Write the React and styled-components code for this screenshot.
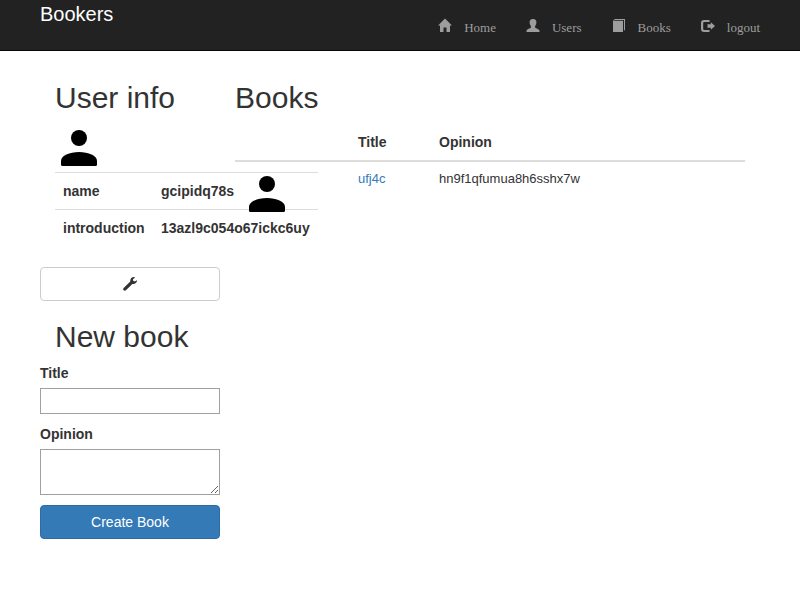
import React from "react";
import styled, { createGlobalStyle } from "styled-components";

const GlobalStyle = createGlobalStyle`
  *, *::before, *::after { box-sizing: border-box; }
  body {
    margin: 0;
    background: #fff;
    color: #333;
    font: 14px/20px "Liberation Sans", Arial, sans-serif;
  }
`;

const Navbar = styled.header`
  display: flex;
  justify-content: space-between;
  height: 51px;
  padding: 0 40px;
  background: #222;
  border-bottom: 1px solid #080808;
`;

const Brand = styled.a`
  color: #fff;
  font-size: 20px;
  line-height: 28px;
`;

const NavList = styled.nav`
  display: flex;
  gap: 30px;
  padding-top: 18px;
`;

const NavLink = styled.a`
  display: flex;
  gap: 12px;
  height: 20px;
  color: #9d9d9d;
  font: 13px/20px "Liberation Serif", "Times New Roman", serif;
`;

const Glyph = styled.svg`
  display: block;
  flex: none;
  width: 14px;
  height: 14px;
  fill: currentColor;
`;

const Page = styled.main`
  display: flex;
  gap: 15px;
  padding: 30px 55px 0 40px;
`;

const Sidebar = styled.aside`
  width: 180px;
  flex: none;
`;

const Content = styled.section`
  flex: 1;
  min-width: 0;
`;

const Heading = styled.h2`
  margin: 0;
  padding-left: ${(p) => (p.$inset ? "15px" : "0")};
  font-size: 30px;
  font-weight: 500;
  line-height: 33px;
`;

const ProfileTable = styled.table`
  width: 263px;
  margin: 10px 0 21px 15px;
  border-collapse: separate;
  border-spacing: 0;
  table-layout: fixed;

  th {
    height: 37px;
    padding: 8px;
    border-top: 1px solid #ddd;
    text-align: left;
    white-space: nowrap;
  }
`;

const AvatarCell = styled.td`
  height: 48px;
  padding: 6px 6px 0;
  vertical-align: top;
`;

const AvatarSvg = styled.svg`
  display: block;
  width: 36px;
  height: 36px;
  fill: #000;
`;

const Button = styled.button`
  display: flex;
  align-items: center;
  justify-content: center;
  width: 100%;
  height: 34px;
  padding: 0;
  border: 1px solid ${(p) => (p.$primary ? "#2e6da4" : "#ccc")};
  border-radius: 4px;
  background: ${(p) => (p.$primary ? "#337ab7" : "#fff")};
  color: ${(p) => (p.$primary ? "#fff" : "#333")};
  font: inherit;
`;

const BookForm = styled.form`
  margin-top: 10px;
`;

const FormHead = styled.div`
  margin-top: 19px;
`;

const Label = styled.label`
  display: block;
  margin-bottom: 5px;
  font-weight: 700;
`;

const TextInput = styled.input`
  display: block;
  width: 100%;
  height: 26px;
  margin-bottom: 10px;
  border: 1px solid #a0a0a0;
  font: inherit;
`;

const TextArea = styled.textarea`
  display: block;
  width: 100%;
  height: 46px;
  margin-bottom: 10px;
  border: 1px solid #a0a0a0;
  font: inherit;
`;

const BookTable = styled.table`
  width: 510px;
  margin-top: 10px;
  border-collapse: separate;
  border-spacing: 0;
  table-layout: fixed;

  th {
    height: 38px;
    padding: 8px;
    border-bottom: 2px solid #ddd;
    text-align: left;
  }
  th:nth-child(1) { width: 115px; }
  th:nth-child(2) { width: 81px; }
`;

const BookCell = styled.td`
  padding: 7px 8px;
  font-size: 13px;
  vertical-align: top;
`;

const BookAvatarCell = styled.td`
  padding: 14px 14px 0;
`;

const BookLink = styled.a`
  color: #337ab7;
`;

const Avatar = () => (
  <AvatarSvg viewBox="0 0 36 36">
    <circle cx="18" cy="8" r="8" />
    <path d="M0 31C0 25.500 8.500 22 18 22S36 25.500 36 31V34.500Q36 36 34.500 36H1.500Q0 36 0 34.500Z" />
  </AvatarSvg>
);

const glyphs = {
  home: "M7 .6 14 7.500H12V14H8.500V9.500H5.500V14H2V7.500H0Z",
  user: "M7 1C9.600 1 10.500 2.500 10.400 4.600C10.300 6.300 9.500 7.600 9.100 8.300V9.500C9.500 10.500 13.500 11 13.500 12.800V14H.5V12.800C.5 11 4.500 10.500 4.900 9.500V8.300C4.500 7.600 3.700 6.300 3.600 4.600C3.500 2.500 4.400 1 7 1Z",
  book: "M2.800 1H13V12.300H12V2H2.500L2 2.700H11V14H1V3Z",
  logout: "M8.500 2V4H3.300Q2.200 4 2.200 5.100V10.900Q2.200 12 3.300 12H8.500V14H3Q0 14 0 11V5Q0 2 3 2ZM9.800 4.200 14 8 9.800 11.800V9.700H6.500V6.300H9.800Z",
  wrench: "M13.900 3.300 11.700 4.500 10.200 3.800 10 2.200 12 .4C10.100-.4 8 .6 7.500 2.500C7.200 3.700 7.400 4.300 7 4.800L.7 11C0 11.700 0 12.700 .6 13.300C1.200 13.900 2.300 13.900 2.900 13.300L9.100 7.200C9.600 6.800 10.400 7.100 11.500 6.700C13.200 6.200 14.200 4.900 13.900 3.300Z",
};

const Icon = ({ name }) => (
  <Glyph viewBox="0 0 14 14" aria-hidden="true">
    <path d={glyphs[name]} />
  </Glyph>
);

const links = [
  ["home", "Home"],
  ["user", "Users"],
  ["book", "Books"],
  ["logout", "logout"],
];

export default function App() {
  return (
    <>
      <GlobalStyle />
      <Navbar>
        <Brand>Bookers</Brand>
        <NavList>
          {links.map(([icon, text]) => (
            <NavLink key={text}>
              <Icon name={icon} />
              {text}
            </NavLink>
          ))}
        </NavList>
      </Navbar>
      <Page>
        <Sidebar>
          <Heading $inset>User info</Heading>
          <ProfileTable>
            <colgroup>
              <col width="98" />
              <col />
            </colgroup>
            <tbody>
              <tr>
                <AvatarCell colSpan={2}>
                  <Avatar />
                </AvatarCell>
              </tr>
              <tr>
                <th>name</th>
                <th>gcipidq78s</th>
              </tr>
              <tr>
                <th>introduction</th>
                <th>13azl9c054o67ickc6uy</th>
              </tr>
            </tbody>
          </ProfileTable>
          <Button aria-label="Edit profile">
            <Icon name="wrench" />
          </Button>
          <FormHead>
            <Heading $inset>New book</Heading>
          </FormHead>
          <BookForm>
            <Label htmlFor="title">Title</Label>
            <TextInput id="title" />
            <Label htmlFor="opinion">Opinion</Label>
            <TextArea id="opinion" />
            <Button type="button" $primary>
              Create Book
            </Button>
          </BookForm>
        </Sidebar>
        <Content>
          <Heading>Books</Heading>
          <BookTable>
            <thead>
              <tr>
                <th />
                <th>Title</th>
                <th>Opinion</th>
              </tr>
            </thead>
            <tbody>
              <tr>
                <BookAvatarCell>
                  <Avatar />
                </BookAvatarCell>
                <BookCell>
                  <BookLink>ufj4c</BookLink>
                </BookCell>
                <BookCell>hn9f1qfumua8h6sshx7w</BookCell>
              </tr>
            </tbody>
          </BookTable>
        </Content>
      </Page>
    </>
  );
}
